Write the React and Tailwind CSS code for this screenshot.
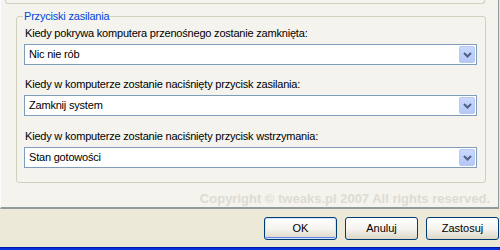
import React from 'react';

const ComboArrow = () => (
  <div className="ml-auto mr-[1px] w-[16px] h-[17px] rounded-[2px] border border-[#b9c9ef] bg-gradient-to-b from-[#cad9fc] to-[#b4c8f6] flex items-center justify-center">
    <svg width="9" height="6" viewBox="0 0 9 6">
      <path d="M1 1 L4.5 4.5 L8 1" fill="none" stroke="#4d6185" strokeWidth="2" />
    </svg>
  </div>
);

const Combo = ({ value }) => (
  <div className="h-[21px] w-[453px] border border-[#7f9db9] bg-white flex items-center">
    <span className="pl-[4px] leading-[13px]">{value}</span>
    <ComboArrow />
  </div>
);

const Field = ({ label, value, className = '' }) => (
  <div className={className}>
    <div className="leading-[13px] pl-[1px] mb-[4px]">{label}</div>
    <Combo value={value} />
  </div>
);

const XpButton = ({ children, focused }) => (
  <button
    className={`w-[73px] h-[23px] rounded-[3px] border border-[#003c74] bg-gradient-to-b from-[#ffffff] via-[#f5f4ef] to-[#dcd8c8] text-[11px] leading-[13px] text-black ${
      focused ? 'shadow-[inset_0_0_0_1px_#cee7ff,inset_0_-1px_0_1px_#6982ee]' : ''
    }`}
  >
    {children}
  </button>
);

export default function App() {
  return (
    <div className="w-[500px] h-[250px] bg-[#ece9d8] flex flex-col overflow-hidden font-['Liberation_Sans',Arial,sans-serif] text-[11px] text-black">
      <div className="h-[209px] w-[499px] bg-[#f4f3ee] border-l border-l-[#fcfcfe] border-r border-r-[#919b9c] border-b-2 border-b-[#919b9c] flex flex-col">
        {/* bottom edge of the previous group box */}
        <div className="ml-[4px] w-[480px] h-[4px] border-x border-b border-[#d0d0bf] rounded-b-[3px]" />

        <div className="relative ml-[15px] mt-[12px] w-[470px] h-[167px] border border-[#d0d0bf] rounded-[3px] pt-[10px] pl-[7px] tracking-[-0.2px]">
          <span className="absolute left-[6px] top-[-8px] px-[1px] bg-[#f4f3ee] text-[#0046d5] leading-[14px]">
            Przyciski zasilania
          </span>
          <Field label="Kiedy pokrywa komputera przenośnego zostanie zamknięta:" value="Nic nie rób" />
          <Field className="mt-[13px]" label="Kiedy w komputerze zostanie naciśnięty przycisk zasilania:" value="Zamknij system" />
          <Field className="mt-[14px]" label="Kiedy w komputerze zostanie naciśnięty przycisk wstrzymania:" value="Stan gotowości" />
        </div>

        <div className="mt-[8px] pr-[8px] text-right font-bold text-[13px] leading-[15px] text-[#dedbd3]">
          Copyright © tweaks.pl 2007 All rights reserved.
        </div>
      </div>

      <div className="flex-1 flex justify-end items-start gap-[8px] pt-[8px] pr-[1px]">
        <XpButton focused>OK</XpButton>
        <XpButton>Anuluj</XpButton>
        <XpButton>Zastosuj</XpButton>
      </div>
      <div className="h-[3px] bg-[#0831d9] border-t border-t-[#0019a8]" />
    </div>
  );
}
